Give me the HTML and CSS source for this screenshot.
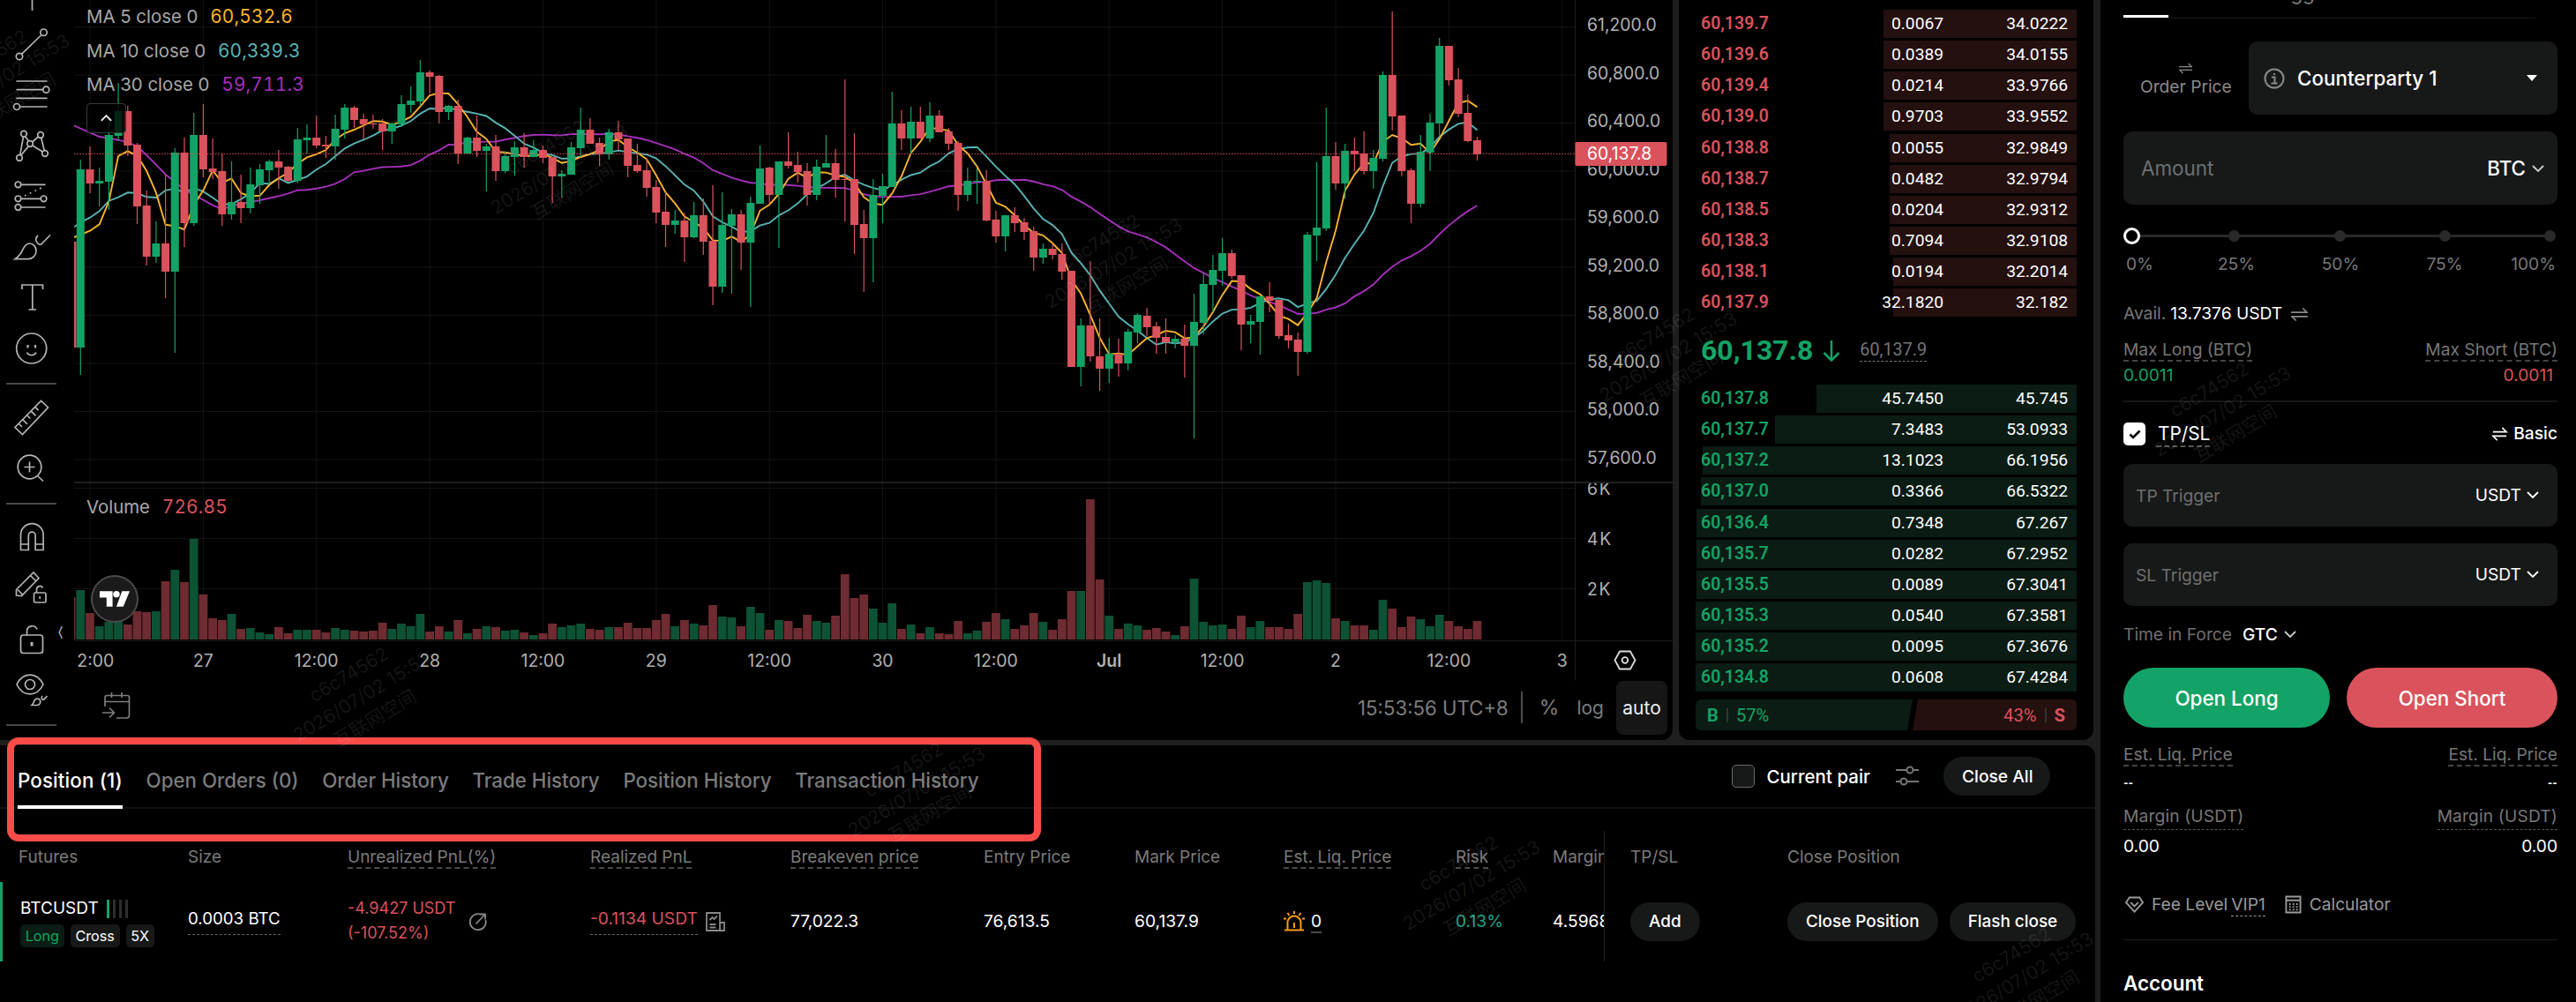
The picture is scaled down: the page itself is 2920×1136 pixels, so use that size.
FILE: index.html
```
<!DOCTYPE html>
<html lang="en">

<head>
    <title>BTCUSDT Futures</title>
    <meta charset="utf-8">
    <meta name="viewport" content="width=device-width">
    <link rel="stylesheet" href="styles.css">
</head>

<body>
    <div id="terminal">
        <main>
            <div id="top-row">
                <section id="chart-panel">
                    <nav id="toolbar">
                        <div class="tool tool-cut"><svg viewBox="0 0 44 21"><path d="M22.5 0V12"/></svg></div>
                        <div class="tool"><svg viewBox="0 0 44 44"><circle cx="35.5" cy="8.7" r="3.7"/><circle cx="8" cy="36" r="3.7"/><path d="M10.5 33.3L33 11.5"/></svg></div>
                        <div class="tool"><svg viewBox="0 0 44 44"><path d="M4.5 7h35M4.5 16.7H35M4.5 26.3h35M9 36h30.5"/><circle cx="38.3" cy="16.7" r="3.5"/><circle cx="5" cy="36" r="3.5"/></svg></div>
                        <div class="tool"><svg viewBox="0 0 44 44"><circle cx="13" cy="8.7" r="3.3"/><circle cx="32" cy="10" r="3.3"/><circle cx="20" cy="20" r="3.3"/><circle cx="37" cy="31" r="3.3"/><circle cx="8" cy="36" r="3.3"/><path d="M12.5 12L8.7 32.7M14.5 11.6L18.5 17M22.5 18L29.5 12M32.7 13.3L36.3 27.7M22.8 22L34.3 29M18.3 22.9L9.8 33"/></svg></div>
                        <div class="tool"><svg viewBox="0 0 44 44"><circle cx="6.5" cy="9.3" r="3.3"/><circle cx="6.5" cy="25.3" r="3.3"/><circle cx="35.5" cy="25.3" r="3.3"/><circle cx="6.5" cy="35" r="3.3"/><path d="M10 9.3h27.5M10 25.3h22M10 35h27.5"/><path d="M14 22l20-9.5" stroke-dasharray="1.8 4.5"/></svg></div>
                        <div class="tool"><svg viewBox="0 0 44 44"><path d="M3 35.6h15c5 0 9-4 9-9.2 0-4.8-3.5-8.4-7.5-8.4-3 0-5 1.5-7.5 6.6-2.3 4.9-4 7.9-9 11z"/><path d="M29 9c-5.5 5 .5 11.5 3.5 10 1-.5 6-6 10.5-10.5"/></svg></div>
                        <div class="tool"><svg viewBox="0 0 44 44"><path d="M11 13V8h23.5v5M22.8 8v28M18.5 36h8.5"/></svg></div>
                        <div class="tool"><svg viewBox="0 0 44 44"><circle cx="21.7" cy="22" r="17"/><path d="M17.5 18v3.5M26 18v3.5" stroke-width="2.2"/><path d="M16.5 26.5c2 4.3 8.5 4.3 10.5 0"/></svg></div>
                        <hr>
                        <div class="tool"><svg viewBox="0 0 44 44"><path d="M3 33.5L32.5 3.5l8 7.5-29 30.5zM7.5 29.5l3.5 3.5M12 25l5 5M16.8 20l3.5 3.5M21.5 15.3l5 5M26 10.7l3.5 3.5"/></svg></div>
                        <div class="tool"><svg viewBox="0 0 44 44"><circle cx="19.5" cy="20.5" r="13.3"/><path d="M13.5 20.5h12M19.5 14.5v12M28.5 30.5l6.5 6"/></svg></div>
                        <hr>
                        <div class="tool"><svg viewBox="0 0 44 44"><path d="M9.5 36.5V19.5a12.8 12.8 0 0 1 25.6 0v17h-9V20a3.9 3.9 0 0 0-7.8 0v16.5zM9.5 30h8.8M26.1 30h9"/></svg></div>
                        <div class="tool"><svg viewBox="0 0 44 44"><path d="M4.5 30v-6.5L24 4l6 6.5-19.5 20zM20.5 7.5l6.5 6.5M6 23.5l6 6"/><rect x="24.5" y="27" width="13.5" height="11" rx="1.5"/><path d="M27.5 27v-4a3.7 3.7 0 0 1 7-1.5M31.2 31v3"/></svg></div>
                        <div class="tool"><svg viewBox="0 0 44 44"><rect x="9.5" y="18" width="25" height="20.5" rx="3"/><path d="M16.5 18v-5a6 6 0 0 1 11.5-1.5"/><path d="M22 26v4.5" stroke-width="3"/></svg></div>
                        <div class="tool"><svg viewBox="0 0 44 44"><path d="M5 16c7-14.5 23-14.5 30 0-7 14.5-23 14.5-30 0z"/><circle cx="20" cy="16" r="5.5"/><path d="M22 39.5h6c3 0 4.5-3 3.5-5.5-1.5-3-5-2-6-.5-1 2-1.5 4-3.5 6zM34 29c-2 2 0 5 2 4l3.5-4"/></svg></div>
                        <hr>
                        <span id="collapse-bar">&#x2329;</span>
                    </nav>

                    <div id="chart">
                        <svg id="plot" viewBox="84 0 1812 771"></svg>
                        <div id="legend">
                            <p>MA 5 close 0 <b class="ma5">60,532.6</b></p>
                            <p>MA 10 close 0 <b class="ma10">60,339.3</b></p>
                            <p>MA 30 close 0 <b class="ma30">59,711.3</b></p>
                            <button id="legend-toggle"><svg viewBox="0 0 16 10"><path d="M2 8l6-6 6 6"/></svg></button>
                        </div>
                        <p id="volume-legend">Volume <b>726.85</b></p>
                        <div id="tv-logo"><svg viewBox="0 0 36 20"><path d="M0 1h15v18H8V8.5H0z"/><circle cx="19.5" cy="4.5" r="3.8"/><path d="M26 1h9l-7.5 18h-8z"/></svg></div>
                        <footer>
                            <svg id="goto-date" viewBox="0 0 32 30"><path d="M3 16V5.5a2 2 0 0 1 2-2h23.500a2 2 0 0 1 2 2V26a3 3 0 0 1-3 3H16M3 10.5h27M10.5 0v6M22 0v6M0 23h13M8 17.5l5.5 5.5-5.5 5.5"/></svg>
                            <span class="clock">15:53:56 UTC+8</span>
                            <i></i>
                            <span class="pct">%</span>
                            <span class="log">log</span>
                            <span class="auto">auto</span>
                        </footer>
                    </div>
                </section>

                <section id="book">
                    <div id="asks"></div>
                    <div id="last-price">
                        <strong>60,137.8</strong>
                        <svg viewBox="0 0 20 26"><path d="M10 1v22M1.5 15l8.5 8.5 8.5-8.5"/></svg>
                        <span>60,137.9</span>
                    </div>
                    <div id="bids"></div>
                    <div id="ratio">
                        <div class="buy"><b>B</b><i></i>57%</div>
                        <div class="sell">43%<i></i><b>S</b></div>
                    </div>
                </section>
            </div>

            <section id="positions">
                <div id="tabs">
                    <span class="tab active">Position (1)</span>
                    <span class="tab">Open Orders (0)</span>
                    <span class="tab">Order History</span>
                    <span class="tab">Trade History</span>
                    <span class="tab">Position History</span>
                    <span class="tab">Transaction History</span>
                    <div id="tab-actions">
                        <span class="checkbox"></span>
                        <span>Current pair</span>
                        <svg viewBox="0 0 26 24"><path d="M0 5h12M20 5h6M0 18h5M13 18h13"/><circle cx="16" cy="5" r="3.5"/><circle cx="9" cy="18" r="3.5"/></svg>
                        <button class="pill">Close All</button>
                    </div>
                </div>
                <div id="highlight"></div>
                <div id="table">
                    <div class="cols head">
                        <span>Futures</span>
                        <span>Size</span>
                        <span><u>Unrealized PnL(%)</u></span>
                        <span><u>Realized PnL</u></span>
                        <span><u>Breakeven price</u></span>
                        <span>Entry Price</span>
                        <span>Mark Price</span>
                        <span><u>Est. Liq. Price</u></span>
                        <span><u>Risk</u></span>
                        <span class="clip">Margin</span>
                        <span class="fixed">TP/SL</span>
                        <span>Close Position</span>
                    </div>
                    <div class="cols row">
                        <div class="symbol">
                            <div class="name">BTCUSDT <i class="on"></i><i></i><i></i><i></i></div>
                            <div class="tags"><span class="long">Long</span><span>Cross</span><span>5X</span></div>
                        </div>
                        <div class="size"><u>0.0003 BTC</u></div>
                        <div class="pnl red">
                            <p>-4.9427 USDT<br>(-107.52%)</p>
                            <svg viewBox="0 0 22 22"><path d="M13 2.5A9 9 0 1 0 19.5 9M8.5 13.5L18 3.5M12.5 2.5h6.5v6"/></svg>
                        </div>
                        <div class="realized red">
                            <u>-0.1134 USDT</u>
                            <svg viewBox="0 0 22 22"><path d="M16 12V1H1v20h20v-9h-5v9M4.5 9l3-3 2 2 3.5-3.5M4.5 14h7M4.5 17.5h7"/></svg>
                        </div>
                        <div>77,022.3</div>
                        <div>76,613.5</div>
                        <div>60,137.9</div>
                        <div class="liq">
                            <svg viewBox="0 0 24 23"><path d="M1 21.5h22M4.5 21V13a7.5 7.5 0 0 1 15 0v8M12 13v6M12 0v3M4.5 2l2 3M19.5 2l-2 3M0 8.5h3M21 8.5h3"/></svg>
                            <u>0</u>
                        </div>
                        <div class="risk">0.13%</div>
                        <div class="clip">4.5968</div>
                        <div class="fixed"><button class="pill">Add</button></div>
                        <div class="close"><button class="pill">Close Position</button><button class="pill">Flash close</button></div>
                    </div>
                </div>
            </section>
        </main>

        <aside id="order">
            <div id="order-tabs"><span class="bar"></span><span class="trigger">Trigger</span></div>
            <div id="price-row">
                <div class="order-price">
                    <svg viewBox="0 0 20 16"><path d="M0 5.5h19l-5-5M20 10.5H1l5 5"/></svg>
                    Order Price
                </div>
                <div class="field">
                    <svg class="info" viewBox="0 0 24 24"><circle cx="12" cy="12" r="10.5"/><path d="M9 10.5h3.5V17M8.5 17.5h7M12 6v2"/></svg>
                    <span>Counterparty 1</span>
                    <i class="caret"></i>
                </div>
            </div>
            <div class="field amount"><label>Amount</label><span>BTC</span><svg class="chev" viewBox="0 0 14 8"><path d="M1 1l6 6 6-6"/></svg></div>
            <div id="slider"><i class="handle"></i><i></i><i></i><i></i><i></i></div>
            <div id="slider-labels"><span>0%</span><span>25%</span><span>50%</span><span>75%</span><span>100%</span></div>
            <div id="avail">Avail. <b>13.7376 USDT</b><svg viewBox="0 0 20 16"><path d="M0 5.5h19l-5-5M20 10.5H1l5 5"/></svg></div>
            <div class="pair max"><u>Max Long (BTC)</u><u>Max Short (BTC)</u></div>
            <div class="pair max-values"><span class="green">0.0011</span><span class="red">0.0011</span></div>
            <div id="tpsl">
                <span class="check"><svg viewBox="0 0 14 11"><path d="M1.5 5.5l3.5 3.5 7.5-7.5"/></svg></span>
                <u>TP/SL</u>
                <svg class="swap" viewBox="0 0 20 16"><path d="M2 5.5h16l-5-5M18 10.5H2l5 5"/></svg>
                <span>Basic</span>
            </div>
            <div class="field trigger-field"><label>TP Trigger</label><span>USDT</span><svg class="chev" viewBox="0 0 14 8"><path d="M1 1l6 6 6-6"/></svg></div>
            <div class="field trigger-field"><label>SL Trigger</label><span>USDT</span><svg class="chev" viewBox="0 0 14 8"><path d="M1 1l6 6 6-6"/></svg></div>
            <div id="tif">Time in Force <b>GTC</b><svg class="chev" viewBox="0 0 14 8"><path d="M1 1l6 6 6-6"/></svg></div>
            <div id="submit"><button class="buy">Open Long</button><button class="sell">Open Short</button></div>
            <div class="pair est"><u>Est. Liq. Price</u><u>Est. Liq. Price</u></div>
            <div class="pair value dashes"><span>--</span><span>--</span></div>
            <div class="pair margin"><u>Margin (USDT)</u><u>Margin (USDT)</u></div>
            <div class="pair value"><span>0.00</span><span>0.00</span></div>
            <div id="fee">
                <svg viewBox="0 0 22 20"><path d="M5 1.5h12l4 6L11 18.5 1 7.5zM6.5 7.5l4.500 4.500 4.500-4.500"/></svg>
                <span>Fee Level</span><u>VIP1</u>
                <svg class="calc" viewBox="0 0 20 22"><path d="M1.5 1.5h17v19h-17zM1.5 6h17"/><path d="M5 10.5h10.5M5 13.8h10.5M5 17h10.5" stroke-dasharray="2 2.2"/></svg>
                <span>Calculator</span>
            </div>
            <h3>Account</h3>
        </aside>
    </div>
    <div id="watermarks"></div>
    <script src="chart.js"></script>
</body>

</html>
```

FILE: styles.css
```
* {
    box-sizing: border-box;
}
html, body {
    width: 2920px;
    height: 1136px;
    margin: 0;
    background-color: #1e1e1e;
    color: #fff;
    font-family: Inter, "Liberation Sans", sans-serif;
    font-size: 19.2px;
    overflow: hidden;
}
p, h3 {
    margin: 0;
}
svg {
    fill: none;
    stroke: #b4b4b4;
    stroke-width: 1.7;
    flex: none;
    display: block;
}
button {
    font: inherit;
    color: #fff;
    border: none;
    padding: 0;
}
u {
    text-decoration: none;
}
.red { color: #da525c; }
.green { color: #14a366; }

#terminal {
    display: flex;
    height: 1136px;
    overflow: hidden;
}
main {
    width: 2381px;
    display: flex;
    flex-direction: column;
    gap: 6px;
}
#top-row {
    display: flex;
    gap: 7px;
    height: 839px;
}

/* chart */
#chart-panel {
    width: 1896px;
    background-color: #000;
    border-radius: 0 0 12px 0;
    display: flex;
    overflow: hidden;
}
#toolbar {
    position: relative;
    width: 84px;
    flex: none;
}
.tool {
    width: 71px;
    height: 57.5px;
    display: grid;
    place-items: center;
}
.tool svg {
    width: 44px;
    height: 44px;
}
.tool-cut, .tool-cut svg {
    height: 21px;
}
#toolbar hr {
    width: 57px;
    height: 2px;
    margin: 10px 0 9px 7px;
    border: none;
    background-color: #484848;
}
#collapse-bar {
    position: absolute;
    left: 66px;
    top: 706px;
    width: 12px;
    font-size: 16px;
    color: #ccc;
}
#chart {
    position: relative;
    width: 1812px;
}
#plot {
    width: 1812px;
    height: 771px;
    stroke: none;
}
#plot text {
    font-size: 19.4px;
    fill: #b0b0b0;
}
#plot .month {
    font-weight: 600;
}
#plot .tag {
    fill: #fff;
}
.up { fill: #14a366; }
.down { fill: #da525c; }
.vol-up { fill: #0d5235; }
.vol-down { fill: #6e2b31; }
.line5, .line10, .line30 { fill: none; stroke-width: 1.9; }
.line5 { stroke: #f9b42d; }
.line10 { stroke: #58b3b4; }
.line30 { stroke: #a52fba; }

#legend, #volume-legend {
    position: absolute;
    left: 14px;
    font-size: 20.4px;
    color: #a8a8a8;
    white-space: nowrap;
}
#legend {
    top: 0;
}
#legend p {
    height: 38.5px;
    line-height: 38.5px;
}
#legend b, #volume-legend b {
    font-size: 20.8px;
    font-weight: 400;
    letter-spacing: 0.2px;
    font-variant-numeric: tabular-nums;
    margin-left: 8px;
}
.ma5 { color: #f9b42d; }
.ma10 { color: #58b3b4; }
.ma30 { color: #a52fba; }
#volume-legend {
    top: 562px;
}
#volume-legend b {
    color: #da525c;
}
#legend-toggle {
    width: 45px;
    height: 34px;
    margin-top: 1px;
    border: 1.5px solid #3a3a3a;
    border-radius: 4px;
    background-color: rgba(0, 0, 0, 0.78);
    display: grid;
    place-items: center;
}
#legend-toggle svg {
    width: 15px;
    height: 10px;
    stroke: #eee;
    stroke-width: 2;
}
#tv-logo {
    position: absolute;
    left: 19px;
    top: 652px;
    width: 54px;
    height: 54px;
    border: 2px solid #4a4a4a;
    border-radius: 50%;
    background-color: #1b1b1b;
    display: grid;
    place-items: center;
}
#tv-logo svg {
    width: 35px;
    height: 20px;
    fill: #fff;
    stroke: none;
}
#chart footer {
    display: flex;
    align-items: center;
    height: 62px;
    padding-right: 6px;
    font-size: 21px;
    color: #7d7d7d;
}
#goto-date {
    width: 32px;
    height: 30px;
    margin: 0 auto 4px 32px;
    stroke: #7d7d7d;
}
#chart footer i {
    width: 2px;
    height: 36px;
    margin: 0 19px 0 14px;
    background-color: #4c4c4c;
}
#chart footer .clock {
    font-size: 22.2px;
}
#chart footer .pct {
    font-size: 23px;
}
#chart footer .log {
    margin: 0 14px 0 20px;
}
#chart footer .auto {
    width: 58px;
    height: 61px;
    line-height: 61px;
    border-radius: 8px;
    background-color: #161616;
    color: #eee;
    text-align: center;
}

/* order book */
#book {
    width: 470px;
    background-color: #000;
    border-radius: 0 0 12px 12px;
    padding: 11px 19px 0;
    font-family: Roboto, "Liberation Sans", sans-serif;
}
#asks, #bids {
    height: 351.5px;
}
.level {
    position: relative;
    display: grid;
    grid-template-columns: 100px 175px 141px;
    padding-left: 6px;
    height: 32px;
    margin-bottom: 3.17px;
    line-height: 32px;
    text-align: right;
}
.level .depth {
    position: absolute;
    right: 0;
    top: 0;
    height: 32px;
    background-color: #24100f;
}
#bids .depth {
    background-color: #0a1c13;
}
.level span {
    position: relative;
}
.level .price {
    text-align: left;
    font-weight: 600;
    font-size: 19.5px;
    color: #da525c;
}
#bids .price {
    color: #14a366;
}
#last-price {
    display: flex;
    align-items: center;
    height: 73.5px;
    padding: 0 0 4px 6px;
}
#last-price strong {
    font-size: 32px;
    font-weight: 700;
    color: #14a366;
}
#last-price svg {
    width: 20px;
    height: 26px;
    margin: 2px 22px 0 11px;
    stroke: #14a366;
    stroke-width: 2.5;
}
#last-price span {
    height: 25px;
    line-height: 24px;
    font-size: 19.8px;
    color: #757575;
    border-bottom: 1px dashed #757575;
}
#ratio {
    position: relative;
    display: flex;
    height: 35px;
    margin-top: 5.5px;
    border-radius: 6px;
    overflow: hidden;
}
#ratio div {
    display: flex;
    align-items: center;
    padding: 0 13px;
    font-size: 20.2px;
}
#ratio .buy {
    width: 246px;
    background-color: #0a1c13;
    color: #14a366;
    clip-path: polygon(0 0, 100% 0, calc(100% - 6px) 100%, 0 100%);
}
#ratio .sell {
    width: 186px;
    justify-content: flex-end;
    background-color: #24100f;
    color: #da525c;
    clip-path: polygon(6px 0, 100% 0, 100% 100%, 0 100%);
}
#ratio i {
    width: 2px;
    height: 16px;
    margin: 0 9px;
    background-color: #333;
}

/* positions */
#positions {
    position: relative;
    width: 2375px;
    flex: 1;
    background-color: #000;
    border-radius: 0 12px 0 0;
}
#tabs {
    display: flex;
    height: 72px;
    padding-left: 20px;
    gap: 26.7px;
    border-bottom: 2px solid #121212;
    font-size: 22.3px;
    font-weight: 500;
    color: #7b7b7b;
    white-space: nowrap;
}
.tab {
    height: 72px;
    line-height: 79px;
}
.tab.active {
    color: #fff;
    letter-spacing: 0.15px;
    border-bottom: 4px solid #fff;
}
#tab-actions {
    display: flex;
    align-items: center;
    margin-left: auto;
    padding-right: 51px;
    height: 70px;
    font-size: 20.5px;
    color: #fff;
}
.checkbox {
    width: 26px;
    height: 26px;
    margin-right: 13px;
    border: 1.5px solid #6b6b6b;
    border-radius: 5px;
    background-color: #171918;
}
#tab-actions svg {
    width: 26px;
    height: 24px;
    margin: 0 28px 0 29px;
    stroke: #777;
    stroke-width: 2;
}
.pill {
    height: 44px;
    padding: 0 21px;
    border-radius: 22px;
    background-color: #171918;
    font-weight: 500;
    white-space: nowrap;
}
#tab-actions .pill {
    width: 121px;
    font-size: 19.2px;
    margin-bottom: 1px;
}
/* frame drawn over the tab strip */
#highlight {
    position: absolute;
    left: 8px;
    top: -9px;
    width: 1172px;
    height: 118px;
    border: 8px solid #f94b47;
    border-radius: 13px;
}
.cols {
    display: grid;
    grid-template-columns: 213px 181px 275px 227px 219px 171px 169px 195px 110px 59px 207px 1fr;
    white-space: nowrap;
}
.head {
    height: 58px;
    margin-top: 25px;
    color: #7b7b7b;
    font-size: 19px;
    line-height: 59px;
}
.head span:first-child {
    padding-left: 21px;
}
.head u {
    display: inline-block;
    height: 26px;
    line-height: 26px;
    border-bottom: 2px dashed #4a4a4a;
}
.clip {
    overflow: hidden;
    border-right: 1px solid #222;
}
.fixed {
    padding-left: 29px;
}
.row {
    height: 90px;
    line-height: 88px;
}
.row u {
    border-bottom: 1px dashed #666;
}
.symbol {
    border-left: 3px solid #14a366;
    padding: 17px 0 0 20px;
}
.symbol .name {
    display: flex;
    align-items: center;
    height: 26px;
    line-height: 26px;
    gap: 4px;
    font-size: 19px;
}
.name i {
    width: 3px;
    height: 21px;
    background-color: #2e2e2e;
}
.name i.on {
    margin-left: 5px;
    background-color: #14a366;
}
.tags {
    display: flex;
    gap: 7px;
    margin-top: 5px;
    font-size: 16.2px;
    line-height: 26px;
}
.tags span {
    height: 26px;
    padding: 0 5.7px;
    border-radius: 5px;
    background-color: #171918;
}
.tags .long {
    background-color: #0a1c13;
    color: #14a366;
}
.size u, .realized u {
    display: inline-block;
    height: 37px;
    line-height: 37px;
    margin-top: 23px;
    vertical-align: top;
}
.size {
    font-size: 18.7px;
}
.pnl, .realized, .liq {
    display: flex;
}
.pnl p {
    font-size: 18px;
    line-height: 28px;
    margin-top: 16px;
}
.pnl svg, .realized svg {
    width: 22px;
    height: 22px;
    margin: 34px 0 0 15px;
    stroke: #888;
    stroke-width: 1.8;
}
.realized svg {
    margin-left: 9px;
}
.liq svg {
    width: 24px;
    height: 23px;
    margin: 33px 7px 0 0;
    stroke: #f79c10;
    stroke-width: 2;
}
.liq u {
    height: 58px;
    border-bottom: 2px solid #4a4a4a;
}
.risk {
    color: #1fa58a;
}
.close {
    display: flex;
    gap: 13px;
}
.row .pill {
    font-size: 18.9px;
    line-height: 44px;
    margin-top: 23px;
    display: block;
}

/* order form */
#order {
    width: 539px;
    background-color: #000;
    padding: 0 21px 0 26px;
}
#order-tabs {
    display: flex;
    height: 21px;
    width: 467px;
    border-bottom: 1px solid #1a1a1a;
    overflow: hidden;
}
#order-tabs .bar {
    width: 51px;
    height: 3px;
    margin-top: 17px;
    background-color: #fff;
}
#order-tabs .trigger {
    height: 22px;
    margin: -19px 0 0 111px;
    font-size: 22.4px;
    line-height: 22px;
    color: #7b7b7b;
}
#price-row {
    display: flex;
    height: 83px;
    margin-top: 26px;
}
.order-price {
    width: 142px;
    padding: 24px 0 0 19px;
    color: #8a8a8a;
    line-height: 29px;
    white-space: nowrap;
}
.order-price svg {
    width: 15px;
    height: 13px;
    margin-left: 44px;
    stroke: #8a8a8a;
}
.field {
    display: flex;
    align-items: center;
    flex: 1;
    border-radius: 10px;
    background-color: #171918;
    padding: 0 20px;
}
#price-row .field {
    padding: 0 23px 0 17px;
    font-size: 22.4px;
    font-weight: 500;
}
.info {
    width: 24px;
    height: 24px;
    margin-right: 14px;
    stroke: #8a8a8a;
    stroke-width: 2;
}
.caret {
    margin-left: auto;
    border: 6px solid transparent;
    border-top: 7.5px solid #fff;
    border-bottom: none;
}
.field label {
    margin-right: auto;
    color: #6f6f6f;
}
.amount {
    height: 83px;
    margin-top: 19px;
    padding-right: 15px;
    font-size: 22.4px;
}
.amount label {
    font-size: 22.4px;
}
.amount span {
    font-weight: 500;
}
.chev {
    width: 14px;
    height: 8px;
    margin-left: 7px;
    stroke: #ccc;
    stroke-width: 1.8;
}
#slider {
    display: flex;
    justify-content: space-between;
    align-items: center;
    height: 20px;
    margin: 25px 2px 0 0;
    background: linear-gradient(#2a2a2a, #2a2a2a) center / 100% 3px no-repeat;
}
#slider i {
    width: 13px;
    height: 13px;
    border-radius: 50%;
    background-color: #2a2a2a;
}
#slider .handle {
    width: 19px;
    height: 19px;
    margin-right: -6px;
    border: 3px solid #fff;
    background-color: #000;
}
#slider-labels {
    display: flex;
    height: 24px;
    line-height: 24px;
    margin: 10px 2px 0 3px;
    color: #777;
}
#slider-labels span {
    width: 118px;
    text-align: center;
    flex: none;
}
#slider-labels span:first-child {
    width: 66px;
    text-align: left;
}
#slider-labels span:last-child {
    width: auto;
    margin-left: auto;
}
#avail {
    display: flex;
    align-items: center;
    height: 24px;
    margin-top: 32px;
    color: #777;
}
#avail b, #tif b {
    margin-left: 5px;
    font-weight: 400;
    color: #fff;
}
#avail svg {
    width: 19px;
    height: 15px;
    margin: 3px 0 0 10px;
    stroke: #8a8a8a;
}
.pair {
    display: flex;
    justify-content: space-between;
}
.pair u {
    height: 27px;
    line-height: 26px;
    color: #777;
    border-bottom: 2px dashed #444;
}
.max {
    margin-top: 16px;
}
.max-values {
    height: 46px;
    padding-right: 5px;
    line-height: 30px;
    border-bottom: 2px solid #161616;
}
#tpsl {
    display: flex;
    height: 28px;
    margin-top: 23px;
}
.check {
    width: 25px;
    height: 26px;
    border-radius: 5px;
    background-color: #fff;
    display: grid;
    place-items: center;
}
.check svg {
    width: 14px;
    height: 11px;
    stroke: #000;
    stroke-width: 2.6;
}
#tpsl u {
    margin: 0 auto 0 12px;
    padding-left: 2px;
    height: 28px;
    line-height: 25px;
    font-size: 20.8px;
    border-bottom: 2px dashed #555;
}
#tpsl .swap {
    width: 19px;
    height: 16px;
    margin: 5px 6px 0 0;
    stroke: #fff;
}
#tpsl > span:last-child {
    line-height: 24px;
    font-weight: 500;
}
.trigger-field {
    height: 71px;
    margin-top: 19px;
    padding: 0 21px 0 14px;
}
.trigger-field span {
    margin-bottom: 2px;
}
.trigger-field .chev {
    stroke: #fff;
    margin-left: 6px;
    margin-bottom: 1px;
}
#tif {
    display: flex;
    align-items: center;
    height: 24px;
    margin-top: 19.5px;
    color: #6f6f6f;
}
#tif b {
    margin-left: 12px;
    font-weight: 500;
}
#submit {
    display: flex;
    gap: 19px;
    height: 68px;
    margin-top: 26.5px;
}
#submit button {
    width: 234px;
    border-radius: 34px;
    font-size: 22.4px;
    font-weight: 500;
    background-color: #14a366;
}
#submit .sell {
    width: 239px;
    background-color: #da525c;
}
.est {
    margin-top: 17px;
}
.value {
    height: 36px;
    line-height: 36px;
}
.dashes span {
    transform: scaleX(0.62);
    transform-origin: left;
}
.dashes span:last-child {
    transform-origin: right;
}
.margin {
    margin-top: 7px;
}
.margin u {
    height: 29px;
    letter-spacing: 0.15px;
    border-bottom: 1px dashed #555;
}
#fee {
    display: flex;
    align-items: center;
    height: 66px;
    margin-top: 23px;
    padding: 0 0 14px 2px;
    line-height: 25px;
    color: #999;
    border-bottom: 1px solid #1d1d1d;
}
#fee svg {
    width: 21px;
    height: 19px;
    margin-right: 9px;
    stroke: #999;
    stroke-width: 2;
}
#fee u {
    margin-left: 4px;
    border-bottom: 1px dashed #999;
}
#fee .calc {
    width: 19px;
    height: 21px;
    margin: 0 9px 0 22px;
}
#order h3 {
    margin-top: 34px;
    font-size: 22.4px;
    line-height: 30px;
    font-weight: 600;
}

#watermarks {
    position: absolute;
    left: 0;
    top: 0;
    width: 2920px;
    height: 1136px;
    overflow: hidden;
    pointer-events: none;
}
#watermarks div {
    position: absolute;
    width: 200px;
    margin: -44px 0 0 -100px;
    line-height: 29px;
    font-family: Inter, "Noto Sans CJK SC", sans-serif;
    font-size: 21px;
    text-align: center;
    color: rgba(255, 255, 255, 0.09);
    transform: rotate(-31deg);
}
```

FILE: chart.js
```
// direction, high, body top, body bottom, low, volume - heights in 1/3 px
var candles = `
g 543 576 1182 1275 168|r 498 576 624 657 90|g 570 615 624 702 45|g 400 459 618 714 60
g 282 378 462 478 70|r 360 378 495 531 51|r 486 492 702 762 96|r 648 699 873 903 93
g 753 828 873 894 96|r 594 828 924 1014 198|g 504 519 924 1200 237|r 468 519 759 840 195
g 384 459 759 768 342|r 354 459 576 603 153|r 471 573 585 609 72|r 522 582 729 768 66
g 549 687 729 747 87|r 594 687 708 759 36|g 570 627 708 726 39|g 558 576 630 693 24
g 543 549 579 627 18|r 510 549 570 642 42|r 564 567 615 618 21|g 435 474 615 624 33
g 423 468 477 522 33|r 393 468 495 504 33|r 462 492 498 537 24|g 390 438 498 543 39
g 354 366 441 471 33|r 360 366 408 435 30|r 387 405 423 474 27|r 390 420 423 438 30
r 405 420 447 510 57|g 417 420 447 489 36|g 324 354 423 432 54|g 294 342 357 384 45
g 204 246 345 360 87|r 240 246 261 318 27|r 255 258 381 420 45|g 357 360 381 408 27
r 339 360 522 558 66|g 465 468 522 522 21|r 393 468 513 534 36|g 489 498 513 651 45
r 459 498 582 615 42|g 516 531 582 588 30|g 480 501 534 597 33|r 453 501 534 570 24
g 477 510 534 534 15|r 495 510 537 555 21|r 534 534 600 690 54|g 579 591 600 672 42
g 483 501 594 594 48|g 366 441 504 534 54|r 402 441 489 489 36|r 468 486 525 564 33
g 438 450 525 543 42|r 411 450 474 510 42|r 471 471 564 603 57|r 489 561 582 588 39
r 540 579 639 669 39|r 612 636 723 759 66|r 654 720 765 840 87|g 714 750 765 795 45
r 723 750 807 891 66|g 687 732 807 810 54|r 675 732 822 867 48|r 630 819 975 1038 117
g 654 765 975 996 78|g 711 729 768 999 75|r 714 729 825 918 45|g 669 690 825 1044 111
g 495 573 693 693 90|r 567 570 663 696 33|g 549 549 663 843 66|r 450 549 564 573 63
r 516 561 585 621 39|r 555 582 663 699 84|g 543 567 663 681 63|g 459 555 570 570 57
r 507 555 612 672 81|r 270 609 612 753 222|r 453 609 765 864 141|r 714 762 810 993 153
g 609 663 810 960 105|g 591 633 666 759 57|g 312 420 636 636 123|r 375 420 471 510 36
g 363 414 471 522 51|r 363 414 471 471 21|g 348 393 471 483 42|r 375 393 450 450 21
r 435 447 489 510 18|r 480 486 663 717 63|g 570 615 663 684 21|g 573 615 618 693 30
r 579 615 750 753 60|r 717 747 804 825 90|g 732 732 804 855 69|r 705 732 759 789 36
r 741 756 789 816 48|r 771 786 876 921 90|g 828 846 876 897 60|r 828 846 867 882 33
r 828 864 924 951 69|r 921 921 1248 1248 165|g 1083 1107 1248 1314 165|r 888 1107 1212 1230 477
r 1083 1212 1254 1329 204|g 1149 1203 1254 1302 81|r 1152 1203 1236 1281 36|g 1119 1128 1236 1260 54
g 1065 1071 1131 1167 48|r 1047 1074 1113 1143 33|r 1095 1110 1149 1203 39|r 1083 1146 1164 1203 27
g 1140 1152 1164 1185 15|r 1104 1152 1176 1284 45|g 999 1095 1176 1491 207|g 927 966 1098 1137 60
g 867 918 969 1062 48|g 810 861 921 972 51|r 849 861 939 948 36|r 936 936 1104 1191 81
g 1071 1092 1104 1167 42|g 1005 1008 1095 1206 63|r 960 1008 1023 1062 42|r 1020 1020 1143 1152 42
r 1101 1140 1158 1185 36|r 1131 1155 1197 1278 87|g 789 798 1197 1203 195|g 552 774 801 888 201
g 366 531 777 786 192|r 483 531 624 645 72|g 489 513 624 675 63|r 468 513 525 582 48
r 447 522 582 594 48|g 510 537 582 642 33|g 243 255 540 549 135|r 39 255 396 444 105
r 393 393 582 600 42|r 573 579 693 759 78|g 459 516 693 705 69|g 387 417 519 582 45
g 129 156 420 465 84|r 156 156 273 291 63|r 231 270 387 399 45|r 321 384 480 483 36
r 465 477 525 546 63`.trim().split(/[\n|]/).map(function (s) {
    var p = s.split(' ');
    return { up: p[0] === 'g', high: p[1] / 3, top: p[2] / 3, bottom: p[3] / 3, low: p[4] / 3, volume: p[5] / 3 };
});

// averages of the bars whose history is off screen
var firstAverages = {
    5: [798, 785, 763, 685],
    10: [757, 740, 718, 683, 671, 655, 657, 670, 672],
    30: [437, 451, 465, 470, 476, 484, 497, 528, 560, 593, 618, 645, 663, 680, 698, 712, 700, 694, 688, 681, 674, 667, 658, 647, 646, 641, 635, 625, 609]
};
var before = { 5: 807, 10: 772, 30: 427 };

function barX(i) {
    return 91.3 + i * 10.697;
}

function rect(cls, x, y, w, h) {
    return '<rect class="' + cls + '" x="' + x.toFixed(1) + '" y="' + y.toFixed(1) + '" width="' + w + '" height="' + h.toFixed(1) + '"/>';
}

function text(x, y, s, cls, anchor) {
    return '<text x="' + x + '" y="' + y + '" class="' + (cls || '') + '" text-anchor="' + (anchor || 'start') + '">' + s + '</text>';
}

function average(n) {
    var pts = ['84,' + before[n] / 3];
    candles.forEach(function (c, i) {
        var y = 0;
        if (i < n - 1) {
            y = firstAverages[n][i] / 3;
        } else {
            for (var k = i - n + 1; k <= i; k++) {
                y += (candles[k].up ? candles[k].top : candles[k].bottom) / n;
            }
        }
        pts.push(barX(i).toFixed(1) + ',' + y.toFixed(1));
    });
    return '<polyline class="line' + n + '" points="' + pts.join(' ') + '"/>';
}

function drawChart() {
    var out = '';
    var grid = '';
    var i;
    var times = ['2:00', '27', '12:00', '28', '12:00', '29', '12:00', '30', '12:00', 'Jul', '12:00', '2', '12:00', '3'];

    times.forEach(function (t, k) {
        var x = (102 + k * 128.36).toFixed(1);
        grid += 'M' + x + ' 0V726';
        // the first label is scrolled half out of view
        out += text(k === 0 ? 108.3 : x, 756, t, t === 'Jul' ? 'month' : '', 'middle');
    });
    for (i = 0; i < 10; i++) {
        var y = 30.5 + i * 54.5;
        grid += 'M84 ' + y + 'H1785';
        out += text(1799, y + 4.5, (61200 - i * 400).toLocaleString('en-US') + '.0');
    }
    ['6', '4', '2'].forEach(function (t, k) {
        var y = 553.5 + k * 57;
        grid += 'M84 ' + y + 'H1785';
        out += text(1799, y + 7.5, t + '&#8202;K');
    });
    out = '<path d="' + grid + '" stroke="#131313" stroke-width="1"/>' + out;
    out += '<path d="M1785.5 0V771M84 726.5H1896" stroke="#1c1c1c" stroke-width="1"/>';
    out += '<rect x="1787" y="536" width="108" height="10" fill="#000"/>';
    out += '<rect x="84" y="546" width="1812" height="2" fill="#1f1f1f"/>';

    out += rect('vol-down', 84, 677, 1.5, 48);
    out += rect('down', 84, 274, 2.5, 120);
    candles.forEach(function (c, i) {
        out += rect(c.up ? 'vol-up' : 'vol-down', barX(i) - 4.9, 725 - c.volume, 9.8, c.volume);
    });
    out += average(30) + average(10) + average(5);
    candles.forEach(function (c, i) {
        var cls = c.up ? 'up' : 'down';
        out += rect(cls, barX(i) - 0.6, c.high, 1.2, c.low - c.high);
        out += rect(cls, barX(i) - 4.5, c.top, 9, c.bottom - c.top);
    });

    // last price line and tag
    out += '<path d="M84 174.5H1785" stroke="#da525c" stroke-width="1" stroke-dasharray="1.5 1.7"/>';
    out += '<rect class="down" x="1785.5" y="161" width="104" height="27" rx="2"/>';
    out += text(1799, 181, '60,137.8', 'tag');

    out += '<path d="M1836 738.5h12l5.5 10-5.5 10h-12l-5.5-10z" fill="none" stroke="#ddd" stroke-width="1.8"/>';
    out += '<circle cx="1842" cy="748.5" r="3.3" fill="none" stroke="#ddd" stroke-width="1.8"/>';
    document.getElementById('plot').innerHTML = out;
}

// price, amount, total, depth bar width
var asks = [
    ['60,139.7', '0.0067', '34.0222', 219], ['60,139.6', '0.0389', '34.0155', 219],
    ['60,139.4', '0.0214', '33.9766', 219], ['60,139.0', '0.9703', '33.9552', 219],
    ['60,138.8', '0.0055', '32.9849', 212], ['60,138.7', '0.0482', '32.9794', 212],
    ['60,138.5', '0.0204', '32.9312', 212], ['60,138.3', '0.7094', '32.9108', 212],
    ['60,138.1', '0.0194', '32.2014', 208], ['60,137.9', '32.1820', '32.182', 208]
];
var bids = [
    ['60,137.8', '45.7450', '45.745', 295], ['60,137.7', '7.3483', '53.0933', 342],
    ['60,137.2', '13.1023', '66.1956', 424], ['60,137.0', '0.3366', '66.5322', 426],
    ['60,136.4', '0.7348', '67.267', 431], ['60,135.7', '0.0282', '67.2952', 431],
    ['60,135.5', '0.0089', '67.3041', 431], ['60,135.3', '0.0540', '67.3581', 432],
    ['60,135.2', '0.0095', '67.3676', 432], ['60,134.8', '0.0608', '67.4284', 432]
];

function drawBook(id, levels) {
    document.getElementById(id).innerHTML = levels.map(function (l) {
        return '<div class="level"><div class="depth" style="width:' + l[3] + 'px"></div>' +
            '<span class="price">' + l[0] + '</span><span>' + l[1] + '</span><span>' + l[2] + '</span></div>';
    }).join('');
}

var marks = [[1, 90], [634, 192], [1262, 299], [1891, 405], [410, 790], [1039, 898], [1668, 1004], [2295, 1108], [2519, 467]];

function drawWatermarks() {
    document.getElementById('watermarks').innerHTML = marks.map(function (m) {
        return '<div style="left:' + m[0] + 'px;top:' + m[1] + 'px">c6c74562<br>2026/07/02 15:53<br>互联网空间</div>';
    }).join('');
}

drawChart();
drawBook('asks', asks);
drawBook('bids', bids);
drawWatermarks();
```
